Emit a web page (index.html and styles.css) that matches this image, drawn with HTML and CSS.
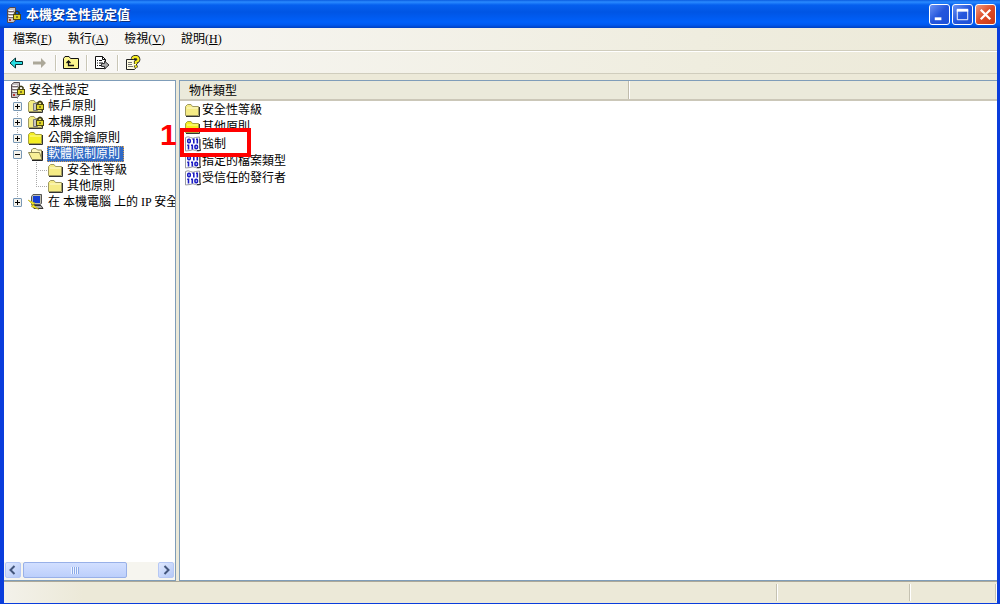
FILE: index.html
```html
<!DOCTYPE html>
<html lang="zh-Hant">
<head>
<meta charset="utf-8">
<title>本機安全性設定值</title>
<link rel="stylesheet" href="styles.css">
</head>
<body>
<svg class="sprites" width="0" height="0" aria-hidden="true">
  <symbol id="i-folder" viewBox="0 0 16 16">
    <path d="M.5 4.500 2.500 2.500H6l1.500 2H13.500V13.500H.5Z" fill="#f5eb86" stroke="#a09a60"/>
    <path d="M2 6H13" stroke="#fffbd0"/>
    <path d="M14.500 5V14.500H1" fill="none" stroke="#333"/>
  </symbol>
  <symbol id="i-bright" viewBox="0 0 16 16">
    <path d="M.5 4.500 2.500 2.500H6l1.500 2H13.500V13.500H.5Z" fill="#f4ee22" stroke="#a9a33c"/>
    <path d="M2 6H13" stroke="#fffca0"/>
    <path d="M14.500 5V14.500H1" fill="none" stroke="#333"/>
  </symbol>
  <symbol id="i-lock" viewBox="0 0 8 10">
    <path d="M2 5V2.500Q4 0 6 2.500V5" fill="none" stroke="#3b3813" stroke-width="1.500"/>
    <rect x=".5" y="4.500" width="7" height="5" fill="#e1d72c" stroke="#4e4910"/>
    <path d="M4 6V8" stroke="#222"/>
  </symbol>
  <symbol id="i-lockfolder" viewBox="0 0 16 16">
    <path d="M.5 4.500 2.500 2.500H6l1.500 2H13.500V13.500H.5Z" fill="#f3eb83" stroke="#a09a60"/>
    <path d="M14.500 5V14.500H1" fill="none" stroke="#333"/>
    <path d="M5.500 5.500H9.500V12.500H5.500Z" fill="#c9c6be" stroke="#777"/>
    <use href="#i-lock" x="8" y="2" width="8" height="10"/>
  </symbol>
  <symbol id="i-open" viewBox="0 0 16 16">
    <path d="M3.500 12.500V4L5 2.500H8L9.500 4H13.500V13" fill="#fff9c0" stroke="#8c8755"/>
    <path d="M.5 6.500H11.500L14 13.500H4Z" fill="#f7ef96" stroke="#8c8755"/>
    <path d="M4 14.500H14.500V5" fill="none" stroke="#222"/>
  </symbol>
  <symbol id="i-server" viewBox="0 0 16 16">
    <path d="M1.500 2.500 4 .5H9.500V13L7.500 15.500H1.500Z" fill="#c9c4c4" stroke="#55484c"/>
    <path d="M2 4.500H8M2 7.500H8M2 10.500H8" stroke="#77696c"/>
    <path d="M3 3.500H7M3 6.500H7M3 9.500H7" stroke="#fff"/>
    <rect x="3" y="12" width="2" height="2" fill="#b83535"/>
    <use href="#i-lock" x="7" y="3" width="8" height="10"/>
  </symbol>
  <symbol id="i-ip" viewBox="0 0 16 16">
    <path d="M3.500 2.500 5 .5H13.500V9.500L12 10.500H3.500Z" fill="#bdbdae" stroke="#555"/>
    <rect x="5" y="2" width="7" height="7" fill="#153ed2"/>
    <path d="M4 11.500H13L15 14.500H6Z" fill="#aaa" stroke="#333"/>
    <path d="M0 6 7 9 5 10.500 11 15.500 3 12.500 5 11Z" fill="#f5e724" stroke="#b8a90c" stroke-width=".5"/>
  </symbol>
  <symbol id="i-policy" viewBox="0 0 16 16">
    <path d="M.5 1.500Q3 0 5.500 1.500T10.500 1.500L14.500 1V12.500L15.500 14.500Q13 16 10.500 14.500T5 14.500L.5 15Z" fill="#fff" stroke="#9a9aa2"/>
    <path d="M15 3V12L15.500 14.500H12" fill="none" stroke="#333"/>
    <g fill="none" stroke="#1b1bc4" stroke-width="1.600">
      <rect x="2.800" y="3.300" width="2.400" height="3.400" rx="1"/><path d="M7.500 3.300H8.800V7.500M11 3.300H12.300V7.500M2.200 9.300H3.500V13.500M6 9.300H7.300V13.500"/><rect x="10" y="9.300" width="2.400" height="3.400" rx="1"/>
    </g>
  </symbol>
</svg>

<div class="window">
  <header class="titlebar">
    <svg class="icon"><use href="#i-server"/></svg>
    <h1 class="title">本機安全性設定值</h1>
    <button class="caption" aria-label="最小化"><svg viewBox="0 0 20 20"><path d="M5 14.500H12" stroke="#fff" stroke-width="3"/></svg></button>
    <button class="caption" aria-label="最大化"><svg viewBox="0 0 20 20"><path d="M4.500 5V15.500H15.500V5" fill="none" stroke="#fff"/><path d="M4 5.500H16" stroke="#fff" stroke-width="3"/></svg></button>
    <button class="caption caption-close" aria-label="關閉"><svg viewBox="0 0 20 20"><path d="M5 5 15 15M15 5 5 15" stroke="#fff" stroke-width="2.400"/></svg></button>
  </header>

  <nav class="menubar">
    <button class="menu">檔案(<u>F</u>)</button>
    <button class="menu">執行(<u>A</u>)</button>
    <button class="menu">檢視(<u>V</u>)</button>
    <button class="menu">說明(<u>H</u>)</button>
  </nav>

  <div class="toolbar">
    <div class="tools">
      <button class="tool" aria-label="上一頁"><svg class="icon" viewBox="0 0 16 16"><path d="M1 8 6.500 3V6.500H13.500V9.500H6.500V13Z" fill="#28dce0" stroke="#062d30"/></svg></button>
      <button class="tool" aria-label="下一頁" disabled><svg class="icon" viewBox="0 0 16 16"><path d="M14 8 9 3V6.500H1V9.500H9V13Z" fill="#aca899"/></svg></button>
    </div>
    <div class="tools">
      <button class="tool" aria-label="上移一層"><svg class="icon" viewBox="0 0 16 16"><path d="M.5 13.500V3.500L2 1.500H6L7.500 3.500H15.500V13.500Z" fill="#fbf58d" stroke="#111"/><path d="M5.500 6V10.500H11M3.500 8 5.500 6 7.500 8" fill="none" stroke="#111" stroke-width="1.300"/></svg></button>
    </div>
    <div class="tools">
      <button class="tool" aria-label="匯出清單"><svg class="icon" viewBox="0 0 16 16"><path d="M1.500 1.500H8.500L11.500 4.500V13.500H1.500Z" fill="#fff" stroke="#111"/><path d="M8.500 1.500V4.500H11.500M3 5.500H4M5 5.500H8M3 8H4M5 8H9M3 10.500H4M5 10.500H8" stroke="#111" fill="none"/><path d="M7.500 8.500H10.500V6L15 10 10.500 14V11.500H7.500Z" fill="#aaa" stroke="#333"/></svg></button>
    </div>
    <div class="tools">
      <button class="tool" aria-label="說明"><svg class="icon" viewBox="0 0 16 16"><path d="M1.500 4.500H11.500V12L9.500 14.500H1.500Z" fill="#fffce0" stroke="#222"/><path d="M3 7.500H7M3 9.500H7M3 11.500H8" stroke="#777"/><path d="M7.500 4Q8 1.800 10.500 1.800T13.500 4.300Q13.500 6 10.800 7V9M10.800 10.500V12.500" fill="none" stroke="#222" stroke-width="3.800"/><path d="M7.500 4Q8 1.800 10.500 1.800T13.500 4.300Q13.500 6 10.800 7V9M10.800 10.500V12.500" fill="none" stroke="#f7ed20" stroke-width="2.200"/></svg></button>
    </div>
  </div>

  <main class="panes">
    <section class="tree-pane">
      <div class="tree">
        <div class="node"><svg class="icon"><use href="#i-server"/></svg><span class="label">安全性設定</span></div>
        <ul class="branch">
          <li><div class="node"><button class="toggle" aria-label="展開"></button><svg class="icon"><use href="#i-lockfolder"/></svg><span class="label">帳戶原則</span></div></li>
          <li><div class="node"><button class="toggle" aria-label="展開"></button><svg class="icon"><use href="#i-lockfolder"/></svg><span class="label">本機原則</span></div></li>
          <li><div class="node"><button class="toggle" aria-label="展開"></button><svg class="icon"><use href="#i-bright"/></svg><span class="label">公開金鑰原則</span></div></li>
          <li>
            <div class="node"><button class="toggle toggle-open" aria-label="摺疊"></button><svg class="icon"><use href="#i-open"/></svg><span class="label selected">軟體限制原則</span></div>
            <ul class="subbranch">
              <li class="node"><svg class="icon"><use href="#i-folder"/></svg><span class="label">安全性等級</span></li>
              <li class="node"><svg class="icon"><use href="#i-folder"/></svg><span class="label">其他原則</span></li>
            </ul>
          </li>
          <li><div class="node"><button class="toggle" aria-label="展開"></button><svg class="icon"><use href="#i-ip"/></svg><span class="label">在 本機電腦 上的 IP 安全</span></div></li>
        </ul>
      </div>
      <div class="scrollbar">
        <button class="arrow" aria-label="向左捲動"><svg viewBox="0 0 14 14"><path d="M8.500 3 4.500 7 8.500 11" fill="none" stroke="#43567c" stroke-width="2"/></svg></button>
        <div class="track"><div class="thumb"><span class="grip"></span></div></div>
        <button class="arrow" aria-label="向右捲動"><svg viewBox="0 0 14 14"><path d="M5.500 3 9.500 7 5.500 11" fill="none" stroke="#43567c" stroke-width="2"/></svg></button>
      </div>
    </section>

    <section class="list-pane">
      <div class="columns"><div class="column">物件類型</div></div>
      <ul class="items">
        <li class="item"><svg class="icon"><use href="#i-folder"/></svg>安全性等級</li>
        <li class="item"><svg class="icon"><use href="#i-bright"/></svg>其他原則</li>
        <li class="item marked"><svg class="icon"><use href="#i-policy"/></svg>強制<span class="marker">1</span></li>
        <li class="item"><svg class="icon"><use href="#i-policy"/></svg>指定的檔案類型</li>
        <li class="item"><svg class="icon"><use href="#i-policy"/></svg>受信任的發行者</li>
      </ul>
    </section>
  </main>

  <footer class="status"><div class="cell cell-main"></div><div class="cell cell-mid"></div><div class="cell cell-end"></div></footer>
</div>
</body>
</html>
```

FILE: styles.css
```css
*, *::after { box-sizing: border-box; }
body {
  margin: 0;
  font: 12px/16px "Liberation Serif", "Noto Sans CJK TC", serif;
  color: #000;
}
button { font: inherit; color: inherit; margin: 0; padding: 0; border: 0; background: none; }
ul { list-style: none; margin: 0; padding: 0; }
svg { display: block; }
.sprites { position: absolute; }
.icon { flex: none; width: 16px; height: 16px; }

.window {
  display: flex;
  flex-direction: column;
  height: 100vh;
  background: #ece9d8;
  border: solid #0a3ddc;
  border-width: 0 3px 1px 4px;
}

.titlebar {
  display: flex;
  align-items: center;
  gap: 2px;
  flex: none;
  height: 28px;
  margin: 0 -3px 0 -4px;
  padding: 1px 4px 0 6px;
  color: #fff;
  background: linear-gradient(#0a5ce0 0, #2a8bff 2px, #0560ef 5px, #0055e4 12px, #0060fa 22px, #0058ee 25px, #0040c0 28px);
}
.title {
  flex: 1;
  margin: 0 0 0 2px;
  font: bold 13px/18px "Liberation Sans", "Noto Sans CJK TC", sans-serif;
  text-shadow: 1px 1px #10307c;
}
.caption {
  width: 21px;
  height: 21px;
  border: 1px solid #fff;
  border-radius: 3px;
  background: linear-gradient(135deg, #6c93f4, #2456dc 50%, #1c50d8);
}
.caption-close { background: linear-gradient(135deg, #f09a80, #dd4a25 50%, #c93a16); }

.menubar {
  display: flex;
  gap: 16px;
  flex: none;
  height: 23px;
  padding: 0 9px;
  background: linear-gradient(90deg, #f9f8f7, #efeddf 70%, #ece9d8);
  border-bottom: 1px solid #d0cdbd;
}
.menu { height: 22px; }

.toolbar {
  display: flex;
  align-items: center;
  flex: none;
  height: 23px;
  padding-left: 5px;
  background: linear-gradient(90deg, #f9f8f7, #efeddf 70%, #ece9d8);
  border-top: 1px solid #fff;
  border-bottom: 1px solid #d0cdbd;
}
.tools { display: flex; gap: 7px; padding-right: 7px; }
.tools + .tools { padding-left: 7px; border-left: 1px solid #c9c6b6; box-shadow: inset 1px 0 #fff; }

.panes {
  display: grid;
  grid-template-columns: minmax(120px, 172px) 1fr;
  gap: 3px;
  flex: 1;
  min-height: 0;
  padding-top: 6px;
  border-bottom: 1px solid #aca899;
}
.tree-pane, .list-pane { background: #fff; border: 1px solid #7f9db9; min-width: 0; }
.tree-pane { display: flex; flex-direction: column; border-left: 0; }
.list-pane { border-right: 0; }

.tree { flex: 1; overflow: hidden; padding: 1px 0 0 6px; white-space: nowrap; }
.node { display: flex; align-items: center; gap: 3px; height: 16px; }
.branch .node { gap: 4px; }
.selected { margin-left: -1px; padding: 0 4px 0 1px; color: #fff; background: #316ac5; outline: 1px dotted #d8a050; outline-offset: -1px; }
.branch {
  padding-left: 3px;
  background: repeating-linear-gradient(#aaa 0 1px, transparent 1px 2px) 7px 0 / 1px 100px no-repeat;
}
.branch .toggle { margin-right: 2px; }
.toggle {
  flex: none;
  width: 9px;
  height: 9px;
  border: 1px solid #7898b5;
  border-radius: 1px;
  background:
    linear-gradient(#000, #000) center / 5px 1px no-repeat,
    linear-gradient(#000, #000) center / 1px 5px no-repeat,
    #f5f3ec;
}
.toggle-open { background: linear-gradient(#000, #000) center / 5px 1px no-repeat, #f5f3ec; }
.subbranch {
  margin-left: 23px;
  padding-left: 12px;
  background:
    repeating-linear-gradient(#aaa 0 1px, transparent 1px 2px) 0 0 / 1px 24px no-repeat,
    repeating-linear-gradient(90deg, #aaa 0 1px, transparent 1px 2px) 0 8px / 11px 1px no-repeat,
    repeating-linear-gradient(90deg, #aaa 0 1px, transparent 1px 2px) 0 24px / 11px 1px no-repeat;
}
.subbranch .node { gap: 3px; }

.scrollbar { display: flex; flex: none; height: 18px; padding: 0 1px; background: #f6f5ef; }
.arrow {
  width: 16px;
  height: 16px;
  border: 1px solid #b6c8f5;
  border-radius: 2px;
  background: linear-gradient(135deg, #e0e9ff, #b4c8f6);
}
.track { flex: 1; padding: 0 2px; }
.thumb {
  display: grid;
  place-items: center;
  width: 78%;
  height: 16px;
  border: 1px solid #98b0e8;
  border-radius: 2px;
  background: linear-gradient(#d2dfff, #bccffb);
}
.grip { width: 8px; height: 7px; background: repeating-linear-gradient(90deg, #eef4ff 0 1px, #8caae8 1px 2px); }

.columns {
  display: flex;
  height: 20px;
  background: #ebeadb;
  border-bottom: 2px solid #cbc7b8;
}
.column { width: 55%; padding: 2px 9px; border-right: 1px solid #c0bcac; box-shadow: 1px 0 #fff; }
.items { padding-left: 5px; }
.item { display: flex; align-items: center; gap: 1px; height: 17px; }
.marked { position: relative; z-index: 1; }
.marked::after {
  content: "";
  position: absolute;
  left: -5px;
  top: -7px;
  width: 71px;
  height: 29px;
  border: 4px solid #f00;
}
.marker {
  position: absolute;
  left: -25px;
  top: -16px;
  font: bold 30px/32px "Liberation Sans", sans-serif;
  color: #f00;
}

.status { display: flex; flex: none; height: 21px; padding: 2px 0; background: linear-gradient(90deg, #f3f1ea, #ece9d8 8%); }
.cell { border-right: 1px solid #c5c2b2; box-shadow: 1px 0 #fff; }
.cell-main { flex: 1; }
.cell-mid { width: 133px; }
.cell-end { width: 86px; margin-right: 1px; }
```
